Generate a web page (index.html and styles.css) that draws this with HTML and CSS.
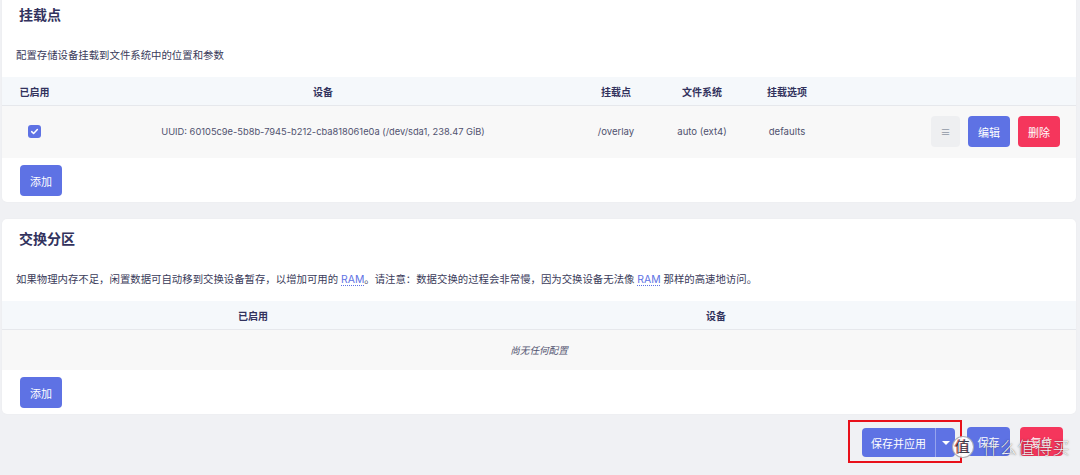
FILE: index.html
```html
<!DOCTYPE html>
<html>
  <head>
    <meta charset="utf-8" />
    <title>挂载点 - 系统</title>
    <link rel="stylesheet" href="styles.css">
  </head>
  <body>
    <div class="page">
      <div class="card">
        <h3 class="card-title">挂载点</h3>
        <p class="card-desc">配置存储设备挂载到文件系统中的位置和参数</p>

        <div class="table mounts">
          <div class="tr thead">
            <div class="th">已启用</div>
            <div class="th">设备</div>
            <div class="th">挂载点</div>
            <div class="th">文件系统</div>
            <div class="th">挂载选项</div>
            <div class="th"></div>
          </div>
          <div class="tr row">
            <div class="td">
              <span class="checkbox">
                <svg viewBox="0 0 12 12" width="9" height="9">
                  <path d="M2.2 6.2 L4.8 8.6 L9.8 3.4" fill="none" stroke="#fff" stroke-width="2" stroke-linecap="round" stroke-linejoin="round" />
                </svg>
              </span>
            </div>
            <div class="td">UUID: 60105c9e-5b8b-7945-b212-cba818061e0a (/dev/sda1, 238.47 GiB)</div>
            <div class="td">/overlay</div>
            <div class="td">auto (ext4)</div>
            <div class="td">defaults</div>
            <div class="td actions">
              <button class="btn btn-drag">&#8801;</button>
              <button class="btn btn-primary">编辑</button>
              <button class="btn btn-danger">删除</button>
            </div>
          </div>
        </div>

        <div class="card-foot">
          <button class="btn btn-primary">添加</button>
        </div>
      </div>

      <div class="card">
        <h3 class="card-title">交换分区</h3>
        <p class="card-desc">如果物理内存不足，闲置数据可自动移到交换设备暂存，以增加可用的 <abbr title="Random Access Memory">RAM</abbr>。请注意：数据交换的过程会非常慢，因为交换设备无法像 <abbr title="Random Access Memory">RAM</abbr> 那样的高速地访问。</p>

        <div class="table swaps">
          <div class="tr thead">
            <div class="th">已启用</div>
            <div class="th">设备</div>
            <div class="th"></div>
          </div>
          <div class="tr row empty">
            <div class="td placeholder">尚无任何配置</div>
          </div>
        </div>

        <div class="card-foot">
          <button class="btn btn-primary">添加</button>
        </div>
      </div>

      <div class="page-actions">
        <div class="highlight">
          <div class="split-btn">
            <button class="btn btn-primary split-main">保存并应用</button>
            <button class="btn btn-primary split-toggle"><span class="caret"></span></button>
          </div>
        </div>
        <button class="btn btn-primary">保存</button>
        <button class="btn btn-danger">复位</button>
      </div>
    </div>

    <div class="watermark">
      <span class="wm-logo">值</span>
      <span class="wm-text">什么值得买</span>
    </div>
  </body>
</html>
```

FILE: styles.css
```css
:root {
  --primary: #5e72e4;
  --danger: #f5365c;
  --bg: #f0f1f4;
  --text: #32325d;
  --muted: #50526f;
  --thead: #f5f8fb;
  --row: #f8f8f8;
  --radius: 4px;
}

*,
*::before,
*::after {
  box-sizing: border-box;
}

html,
body {
  margin: 0;
  padding: 0;
  background: var(--bg);
  width: 1080px;
  height: 475px;
  overflow: hidden;
}

body {
  font-family: Inter, "Noto Sans CJK SC", sans-serif;
  color: var(--text);
  position: relative;
}

/* content is scrolled a few pixels down */
.page {
  margin-top: -5px;
  padding: 0 4px 0 2px;
  display: flex;
  flex-direction: column;
  gap: 17px;
}

.card {
  background: #fff;
  border-radius: 5px;
  padding: 10px 0 6px;
  box-shadow: 0 0 2px rgba(0, 0, 0, 0.04);
}

.card-title {
  margin: 0;
  padding-left: 17px;
  font-size: 14px;
  line-height: 20px;
  font-weight: 700;
}

.card-desc {
  margin: 23px 0 13px;
  padding-left: 14px;
  font-size: 10.4px;
  line-height: 16px;
  color: #3a3b5a;
}

abbr {
  color: var(--primary);
  text-decoration: underline dotted;
  text-underline-offset: 2px;
}

/* tables */
.tr {
  display: grid;
  align-items: center;
  text-align: center;
}

.mounts .tr {
  grid-template-columns: 65px 512px 74px 98px 72px 1fr;
}

.swaps .tr {
  grid-template-columns: 502px 424px 1fr;
}

.thead {
  background: var(--thead);
  height: 29px;
  border-bottom: 1px solid #e6e8ec;
}

.th {
  font-size: 10px;
  font-weight: 700;
}

.row {
  background: var(--row);
  min-height: 40px;
}

.mounts .row {
  padding: 10px 0 11px;
}

.td {
  font-size: 9.6px;
  color: var(--muted);
}

.mounts .td:nth-child(2) {
  font-size: 9.3px;
}

.row.empty {
  display: flex;
  justify-content: center;
}

.placeholder {
  font-style: italic;
}

.checkbox {
  display: inline-flex;
  align-items: center;
  justify-content: center;
  width: 13px;
  height: 13px;
  border-radius: 3px;
  background: var(--primary);
  vertical-align: middle;
}

.actions {
  display: flex;
  justify-content: flex-end;
  gap: 8px;
  padding-right: 16px;
}

.card-foot {
  padding: 7px 0 0 18px;
}

/* buttons */
.btn {
  height: 31px;
  padding: 0 10px;
  border: none;
  border-radius: var(--radius);
  font-family: inherit;
  font-size: 11px;
  color: #fff;
  cursor: pointer;
}

.btn-primary {
  background: var(--primary);
}

.btn-danger {
  background: var(--danger);
}

.btn-drag {
  width: 29px;
  padding: 0;
  background: #eeeff1;
  color: #9098a6;
  font-size: 10px;
}

.page-actions {
  margin-top: -11px;
  display: flex;
  justify-content: flex-end;
  align-items: center;
  gap: 10px;
  padding-right: 13px;
}

.page-actions > .btn {
  height: 29px;
  width: 43px;
  padding: 0;
}

.highlight {
  border: 2px solid #e8101a;
  padding: 6px 5px 4px 12px;
  margin-right: -5px;
}

.split-btn {
  display: flex;
}

.split-btn .btn {
  height: 29px;
}

.split-main {
  border-radius: var(--radius) 0 0 var(--radius);
  padding: 0 9px;
  border-right: 1px solid rgba(255, 255, 255, 0.35);
}

.split-toggle {
  border-radius: 0 var(--radius) var(--radius) 0;
  width: 19px;
  padding: 0;
  display: flex;
  align-items: center;
  justify-content: center;
}

.caret {
  width: 0;
  height: 0;
  border-left: 4px solid transparent;
  border-right: 4px solid transparent;
  border-top: 4px solid #fff;
}

/* site watermark over the corner */
.watermark {
  position: absolute;
  right: 10px;
  bottom: 16px;
  display: flex;
  align-items: center;
  gap: 9px;
  pointer-events: none;
}

.wm-logo {
  width: 22px;
  height: 22px;
  border-radius: 50%;
  background: rgba(255, 255, 255, 0.94);
  border: 1px solid rgba(110, 110, 120, 0.55);
  display: flex;
  align-items: center;
  justify-content: center;
  font-size: 15px;
  line-height: 1;
  color: #3b3b48;
  text-shadow: -1px 0 0 rgba(210, 40, 50, 0.7);
}

.wm-text {
  font-size: 17px;
  font-weight: 300;
  letter-spacing: 0.5px;
  color: rgba(255, 255, 255, 0.95);
  text-shadow: 0 0 1px rgba(0, 0, 0, 0.55), 0 0 3px rgba(0, 0, 0, 0.25);
}
```
